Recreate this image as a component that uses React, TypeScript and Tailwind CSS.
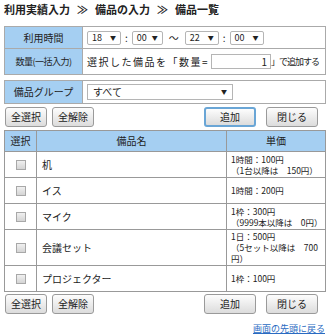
import React from 'react';

const font = { fontFamily: '"Noto Sans CJK JP", "Liberation Sans", sans-serif' };

interface Item {
  name: string;
  price: string[];
  tall?: boolean;
}

const items: Item[] = [
  { name: '机', price: ['1時間：100円', '（1台以降は　150円）'] },
  { name: 'イス', price: ['1時間：200円'] },
  { name: 'マイク', price: ['1枠：300円', '（9999本以降は　0円）'] },
  { name: '会議セット', price: ['1日：500円', '（5セット以降は　700', '円）'], tall: true },
  { name: 'プロジェクター', price: ['1枠：100円'] },
];

const Btn: React.FC<{ label: string; focus?: boolean; wide?: boolean }> = ({ label, focus, wide }) => (
  <button
    type="button"
    className={`h-[20px] rounded-[3px] bg-gradient-to-b from-[#fdfdfd] to-[#dcdcdc] text-[10px] leading-none text-[#222] ${
      wide ? 'w-[52px]' : 'px-[5px]'
    } ${focus ? 'border-2 border-[#6aa6d6]' : 'border border-[#9a9a9a]'}`}
  >
    {label}
  </button>
);

const Sel: React.FC<{ value: string; w: string }> = ({ value, w }) => (
  <div
    className={`flex h-[14px] items-center justify-between rounded-[2px] border border-[#b5b5b5] bg-white px-[4px] text-[9px] leading-none ${w}`}
  >
    <span>{value}</span>
    <span className="text-[6px]">▼</span>
  </div>
);

const Checkbox = () => (
  <div className="mx-auto h-[10px] w-[10px] border border-[#a8a8a8] bg-gradient-to-b from-[#f0f0f0] to-[#d4d4d4]" />
);

const ButtonRow: React.FC<{ focus?: boolean }> = ({ focus }) => (
  <div className="flex items-center justify-between pl-[1px]">
    <div className="flex gap-[5px]">
      <Btn label="全選択" />
      <Btn label="全解除" />
    </div>
    <div className="flex gap-[10px] pr-[8px]">
      <Btn label="追加" wide focus={focus} />
      <Btn label="閉じる" wide />
    </div>
  </div>
);

export default function App() {
  return (
    <div className="h-[336px] w-[330px] bg-white px-[4px] text-[#222]" style={font}>
      {/* Breadcrumb */}
      <div className="flex h-[17px] items-center gap-[7px] pt-[1px] text-[11px] font-bold leading-none">
        <span>利用実績入力</span>
        <span>≫</span>
        <span>備品の入力</span>
        <span>≫</span>
        <span>備品一覧</span>
      </div>

      {/* Time / Quantity */}
      <div className="mt-[9px] border border-[#aaa] text-[10px] leading-none">
        <div className="flex h-[22px] border-b border-[#aaa]">
          <div className="flex w-[78px] items-center justify-center border-r border-[#aaa] bg-[#a5cff2]">利用時間</div>
          <div className="flex items-center gap-[4px] pl-[4px]">
            <Sel value="18" w="w-[34px]" />
            <span>:</span>
            <Sel value="00" w="w-[31px]" />
            <span className="px-[2px]">～</span>
            <Sel value="22" w="w-[34px]" />
            <span>:</span>
            <Sel value="00" w="w-[34px]" />
          </div>
        </div>
        <div className="flex h-[25px]">
          <div className="flex w-[78px] items-center justify-center border-r border-[#aaa] bg-[#a5cff2] text-[9px] tracking-[-0.5px]">
            数量(一括入力)
          </div>
          <div className="flex items-center whitespace-nowrap pl-[4px]">
            <span className="tracking-[1.5px]">選択した備品を「数量=</span>
            <div className="ml-[2px] flex h-[15px] w-[60px] shrink-0 items-center justify-end border border-[#b5b5b5] pr-[3px]">1</div>
            <span className="text-[9px] tracking-[-1px]">」で追加する</span>
          </div>
        </div>
      </div>

      {/* Group */}
      <div className="mt-[5px] flex h-[24px] border border-[#aaa] text-[10px] leading-none">
        <div className="flex w-[78px] items-center justify-center border-r border-[#aaa] bg-[#a5cff2]">備品グループ</div>
        <div className="flex items-center pl-[4px]">
          <div className="flex h-[16px] w-[146px] items-center justify-between border border-[#b5b5b5] px-[5px]">
            <span>すべて</span>
            <span className="text-[6px]">▼</span>
          </div>
        </div>
      </div>

      <div className="mt-[3px]">
        <ButtonRow focus />
      </div>

      {/* Items */}
      <table className="mt-[3px] w-[322px] border-collapse text-[10px] leading-[12px]">
        <thead>
          <tr className="h-[21px] bg-[#a5cff2]">
            <th className="w-[32px] border border-[#999] font-normal">選択</th>
            <th className="w-[190px] border border-[#999] font-normal">備品名</th>
            <th className="border border-[#999] font-normal">単価</th>
          </tr>
        </thead>
        <tbody>
          {items.map((it) => (
            <tr key={it.name} className={it.tall ? 'h-[36px]' : 'h-[26px]'}>
              <td className="border border-[#999]">
                <Checkbox />
              </td>
              <td className="border border-[#999] pl-[5px]">{it.name}</td>
              <td className="border border-[#999] pl-[4px] text-[8.5px]">
                {it.price.map((p) => (
                  <div key={p} className="leading-[11px]">
                    {p}
                  </div>
                ))}
              </td>
            </tr>
          ))}
        </tbody>
      </table>

      <div className="mt-[2px]">
        <ButtonRow />
      </div>

      <div className="mt-[10px] flex justify-end pr-[1px]">
        <a href="#" className="text-[9px] leading-none text-[#2a6bc2] underline">
          画面の先頭に戻る
        </a>
      </div>
    </div>
  );
}
